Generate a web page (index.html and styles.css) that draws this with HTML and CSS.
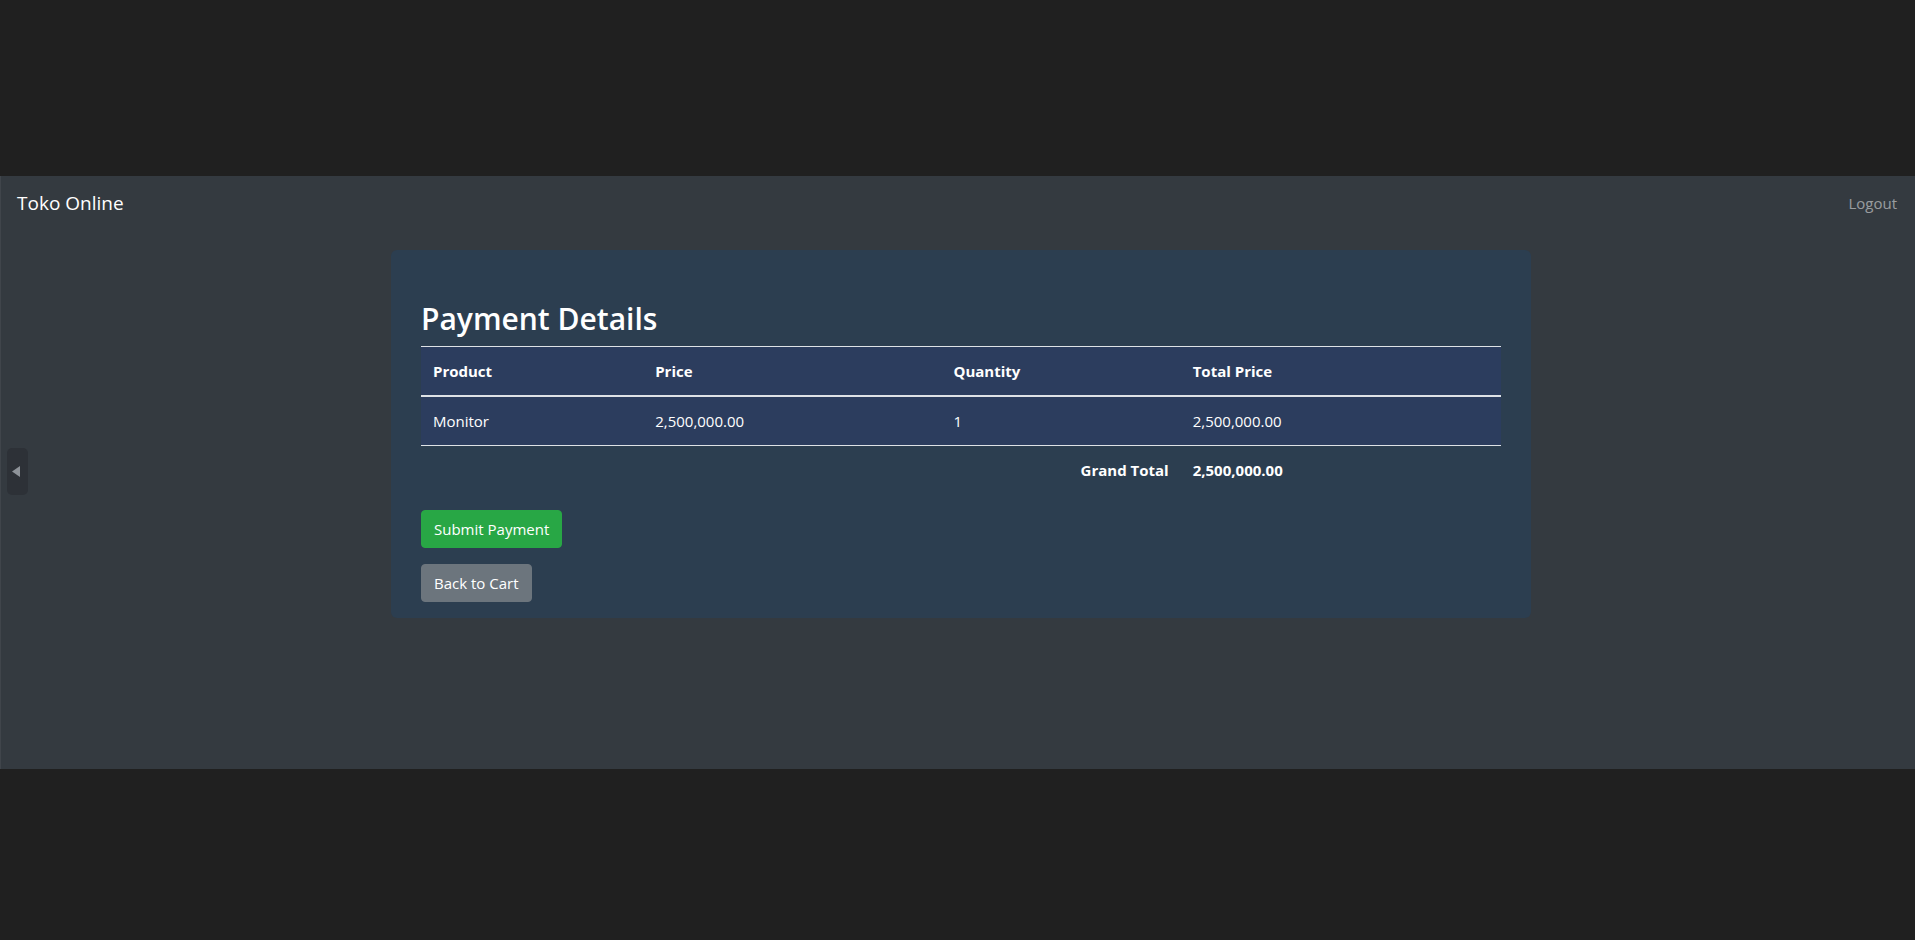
FILE: index.html
```html
<!DOCTYPE html>
<html lang="en">
<head>
<meta charset="utf-8">
<title>Payment Details - Toko Online</title>
<link rel="stylesheet" href="styles.css">
</head>
<body>
<div class="top-gap"></div>
<div class="app">
  <nav class="navbar">
    <a class="brand" href="#">Toko Online</a>
    <a class="logout" href="#">Logout</a>
  </nav>
  <button class="side-handle" aria-label="Toggle sidebar">
    <svg width="8" height="11" viewBox="0 0 8 11"><path d="M8 0 L0 5.5 L8 11 Z" fill="#8e9399"/></svg>
  </button>
  <main class="card">
    <h2 class="title">Payment Details</h2>
    <table class="table">
      <colgroup>
        <col class="c1"><col class="c2"><col class="c3"><col class="c4">
      </colgroup>
      <thead>
        <tr class="shaded">
          <th>Product</th>
          <th>Price</th>
          <th>Quantity</th>
          <th>Total Price</th>
        </tr>
      </thead>
      <tbody>
        <tr class="shaded">
          <td>Monitor</td>
          <td>2,500,000.00</td>
          <td>1</td>
          <td>2,500,000.00</td>
        </tr>
        <tr class="total-row">
          <td colspan="3" class="right">Grand Total</td>
          <td>2,500,000.00</td>
        </tr>
      </tbody>
    </table>
    <div class="actions">
      <button class="btn btn-success">Submit Payment</button>
      <button class="btn btn-secondary">Back to Cart</button>
    </div>
  </main>
</div>
<div class="bottom-gap"></div>
</body>
</html>
```
FILE: styles.css
```css
* { box-sizing: border-box; }
html, body { margin: 0; height: 100%; }
body {
  background: #202020;
  font-family: "Open Sans", "Liberation Sans", sans-serif;
  color: #fff;
  display: flex;
  flex-direction: column;
}
.top-gap { height: 176px; flex: none; }
.app {
  position: relative;
  height: 593px;
  flex: none;
  background: #343a40;
  border-left: 1px solid #40454b;
}
.bottom-gap { flex: 1; }

.navbar {
  display: flex;
  justify-content: space-between;
  align-items: center;
  padding: 7px 18px 9px 16px;
}
.brand {
  color: #fff;
  text-decoration: none;
  font-size: 19px;
  line-height: 30px;
  padding: 5px 0;
}
.logout {
  color: rgba(255,255,255,0.5);
  text-decoration: none;
  font-size: 15px;
  line-height: 24px;
  padding: 8px 0;
}

.side-handle {
  position: absolute;
  left: 6px;
  top: 272px;
  width: 21px;
  height: 47px;
  padding: 0 0 0 5px;
  border: 0;
  border-radius: 5px;
  background: #2d3137;
  display: flex;
  align-items: center;
}

.card {
  width: 1140px;
  margin: 18px 0 0 calc(50% - 567px);
  padding: 50px 30px 16px;
  background: #2c3e50;
  border-radius: 6px;
}
.title {
  margin: 0 0 8px;
  font-size: 30px;
  font-weight: 600;
  line-height: 38px;
  color: #fff;
}
.table {
  width: 100%;
  border-collapse: collapse;
  margin-bottom: 16px;
  color: #fff;
  font-size: 15px;
}
.c1 { width: 222px; }
.c2 { width: 298px; }
.c3 { width: 239px; }
.c4 { width: 320px; }
.table th, .table td {
  padding: 12px;
  line-height: 24px;
  text-align: left;
  vertical-align: top;
  border-top: 1px solid #dee2e6;
}
.table th { font-weight: 700; }
.table thead th { border-bottom: 2px solid #dee2e6; }
.shaded { background: #2c3d5e; }
.total-row td { font-weight: 700; }
.table td.right { text-align: right; }

.actions {
  display: flex;
  flex-direction: column;
  align-items: flex-start;
  gap: 16px;
}
.btn {
  font-family: inherit;
  font-size: 15px;
  line-height: 24px;
  padding: 6px 12px;
  border: 1px solid transparent;
  border-radius: 4px;
  color: #fff;
  cursor: pointer;
}
.btn-success { background: #28a745; border-color: #28a745; }
.btn-secondary { background: #6c757d; border-color: #6c757d; }
```
